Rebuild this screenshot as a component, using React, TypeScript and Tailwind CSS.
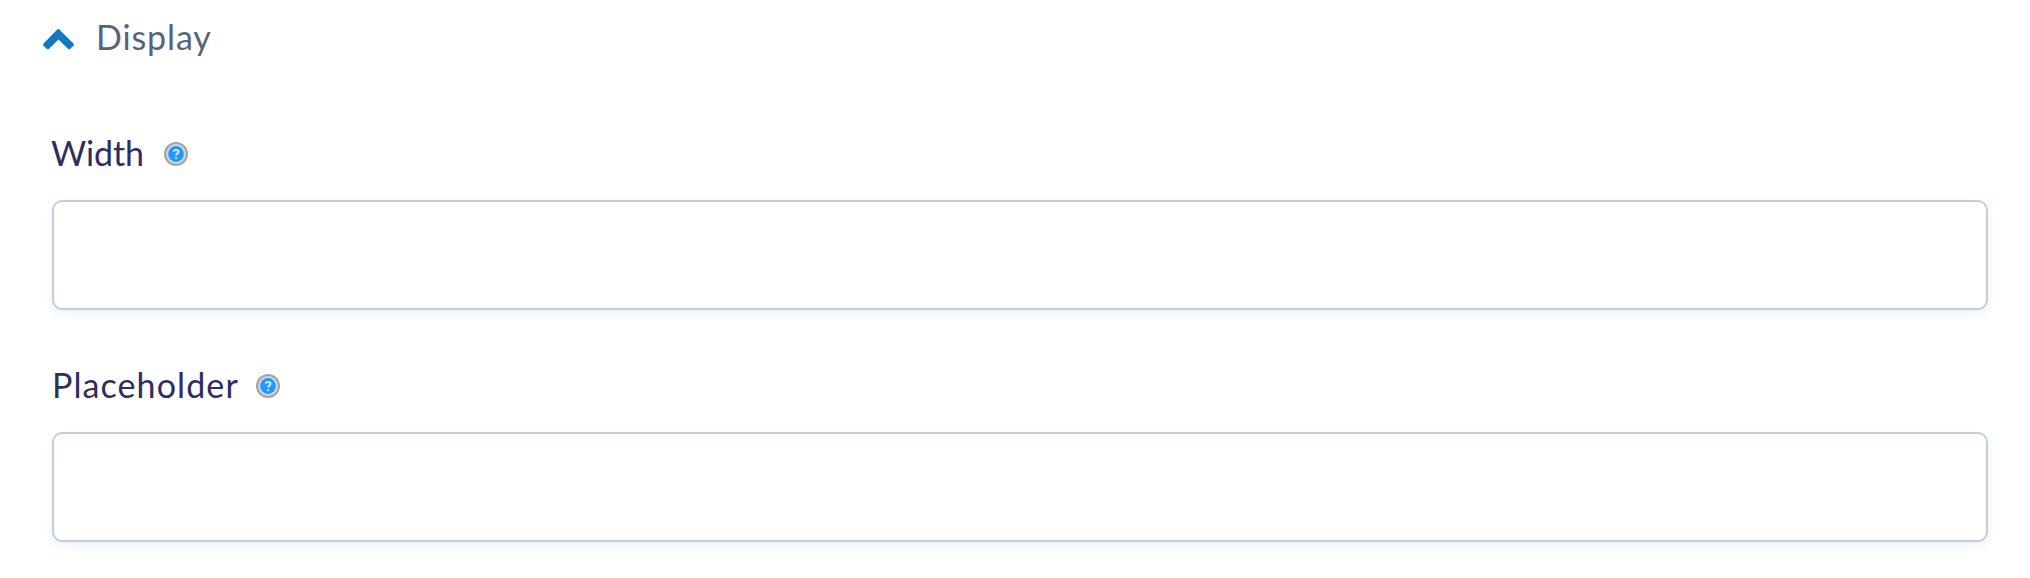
import { useId, useState } from 'react';

const fields = [
  { name: 'width', label: 'Width', text: '-ml-px tracking-[-0.1px]', gap: 'gap-[20px]' },
  { name: 'placeholder', label: 'Placeholder', text: 'tracking-[1.1px]', gap: 'gap-[17px]' },
];

function Chevron({ open }: { open: boolean }) {
  return (
    <svg viewBox="0 0 32 22" className={open ? 'mt-1 h-[23px] w-[33px]' : 'mt-1 h-[23px] w-[33px] rotate-180'}>
      <path
        d="M16 0.6 30.7 15.1Q31.4 16 30.7 16.8L27.2 20.3Q26.3 21 25.4 20.3L16 11 6.6 20.3Q5.7 21 4.8 20.3L1.3 16.8Q0.6 16 1.3 15.1L14.8 1.4Q16 0.2 17.2 1.4Z"
        fill="#1278bf"
      />
    </svg>
  );
}

function HelpIcon() {
  const id = useId();

  return (
    <svg viewBox="0 0 24 24" className="mt-0.5 size-6">
      <defs>
        <filter id={id} x="-10%" y="-10%" width="120%" height="120%">
          <feGaussianBlur stdDeviation="0.7" />
        </filter>
      </defs>
      <g filter={`url(#${id})`}>
        <circle cx="12" cy="12" r="12" fill="#a5a3a1" />
        <circle cx="12" cy="12" r="9.9" fill="#cbdae8" />
        <circle cx="12" cy="12" r="7.9" fill="#2297ff" />
        <path d="M9.7 9.6C9.8 7.4 14.6 7.4 14.4 9.9 14.3 11.4 12.3 11.6 12.2 13.5" fill="none" stroke="#c5e5ff" strokeWidth="2.2" />
        <circle cx="12.1" cy="16.1" r="1.2" fill="#c5e5ff" />
      </g>
    </svg>
  );
}

export default function App() {
  const [open, setOpen] = useState(true);

  return (
    <div className="min-h-[578px] bg-white pt-[17px] pr-[42px] pl-[52px] font-['Lato',sans-serif]">
      <button
        type="button"
        onClick={() => setOpen(!open)}
        className="-ml-[10px] flex h-10 cursor-pointer items-center gap-[21px] text-[34px] leading-10 tracking-[0.9px] text-[#54647c]"
      >
        <Chevron open={open} />
        Display
      </button>

      {open && (
        <div className="mt-[76px] space-y-[55px]">
          {fields.map((field) => (
            <div key={field.name}>
              <div className={`flex h-10 items-center ${field.gap}`}>
                <label htmlFor={field.name} className={`text-[34px] leading-10 text-[#2d2e5f] ${field.text}`}>
                  {field.label}
                </label>
                <HelpIcon />
              </div>
              <input
                id={field.name}
                type="text"
                className="mt-[27px] block h-[110px] w-full rounded-[10px] border-2 border-[#c3cddd] bg-white px-6 text-[34px] text-[#2d2e5f] shadow-[0_4px_8px_#e8f4ff] outline-none"
              />
            </div>
          ))}
        </div>
      )}
    </div>
  );
}
